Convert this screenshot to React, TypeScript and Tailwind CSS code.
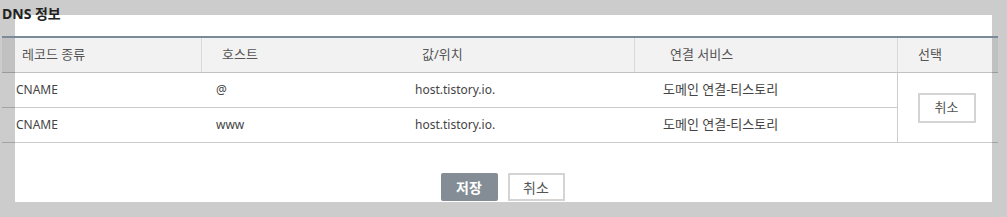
import React from "react";

const font = { fontFamily: '"Noto Sans", "Noto Sans CJK KR", sans-serif' };

export default function App() {
  return (
    <div
      className="h-[217px] w-[1007px] overflow-hidden bg-[#cccccc] pl-[15px] pt-[15px]"
      style={font}
    >
      <div className="flex h-[187px] w-[977px] flex-col bg-white">
        <h2 className="-mt-[11px] -ml-[13px] h-[20px] text-[14px] font-bold leading-[20px] text-[#222]">
          DNS 정보
        </h2>
        <div className="-ml-[13px] mt-[12px] w-[996px] text-[12px]">
          <div className="grid grid-cols-[199px_199px_234px_263px_101px] border-t-2 border-b border-t-[#7b8a98] border-b-black/20 bg-black/5 text-[13px] text-[#555]">
            <div className="flex h-[34px] items-center pl-[20px]">레코드 종류</div>
            <div className="flex h-[34px] items-center border-l border-black/10 pl-[20px]">호스트</div>
            <div className="flex h-[34px] items-center pl-[22px]">값/위치</div>
            <div className="flex h-[34px] items-center border-l border-black/10 pl-[35px]">연결 서비스</div>
            <div className="flex h-[34px] items-center border-l border-black/10 pl-[20px]">선택</div>
          </div>
          <div className="grid grid-cols-[199px_199px_234px_263px_101px] border-b border-black/20 text-[#444]">
            <div className="flex h-[35px] items-center border-b border-black/20 pl-[14px]">CNAME</div>
            <div className="flex h-[35px] items-center border-b border-black/20 pl-[15px]">@</div>
            <div className="flex h-[35px] items-center border-b border-black/20 pl-[15px]">host.tistory.io.</div>
            <div className="flex h-[35px] items-center border-b border-black/20 pl-[29px] text-[13px]">도메인 연결-티스토리</div>
            <div className="row-span-2 flex items-center justify-center border-l border-black/20 pr-[3px]">
              <button className="h-[30px] w-[58px] border-2 border-[#d4d4d4] bg-white text-[13px] text-[#555]">
                취소
              </button>
            </div>
            <div className="flex h-[34px] items-center pl-[14px]">CNAME</div>
            <div className="flex h-[34px] items-center pl-[15px]">www</div>
            <div className="flex h-[34px] items-center pl-[15px]">host.tistory.io.</div>
            <div className="flex h-[34px] items-center pl-[29px] text-[13px]">도메인 연결-티스토리</div>
          </div>
        </div>
        <div className="mt-[30px] flex justify-center gap-[10px] pr-[2px]">
          <button className="h-[28px] w-[57px] rounded-[2px] bg-[#848d95] text-[14px] font-bold text-white">
            저장
          </button>
          <button className="h-[28px] w-[57px] border-2 border-[#d4d4d4] bg-white text-[14px] text-[#555]">
            취소
          </button>
        </div>
      </div>
    </div>
  );
}
